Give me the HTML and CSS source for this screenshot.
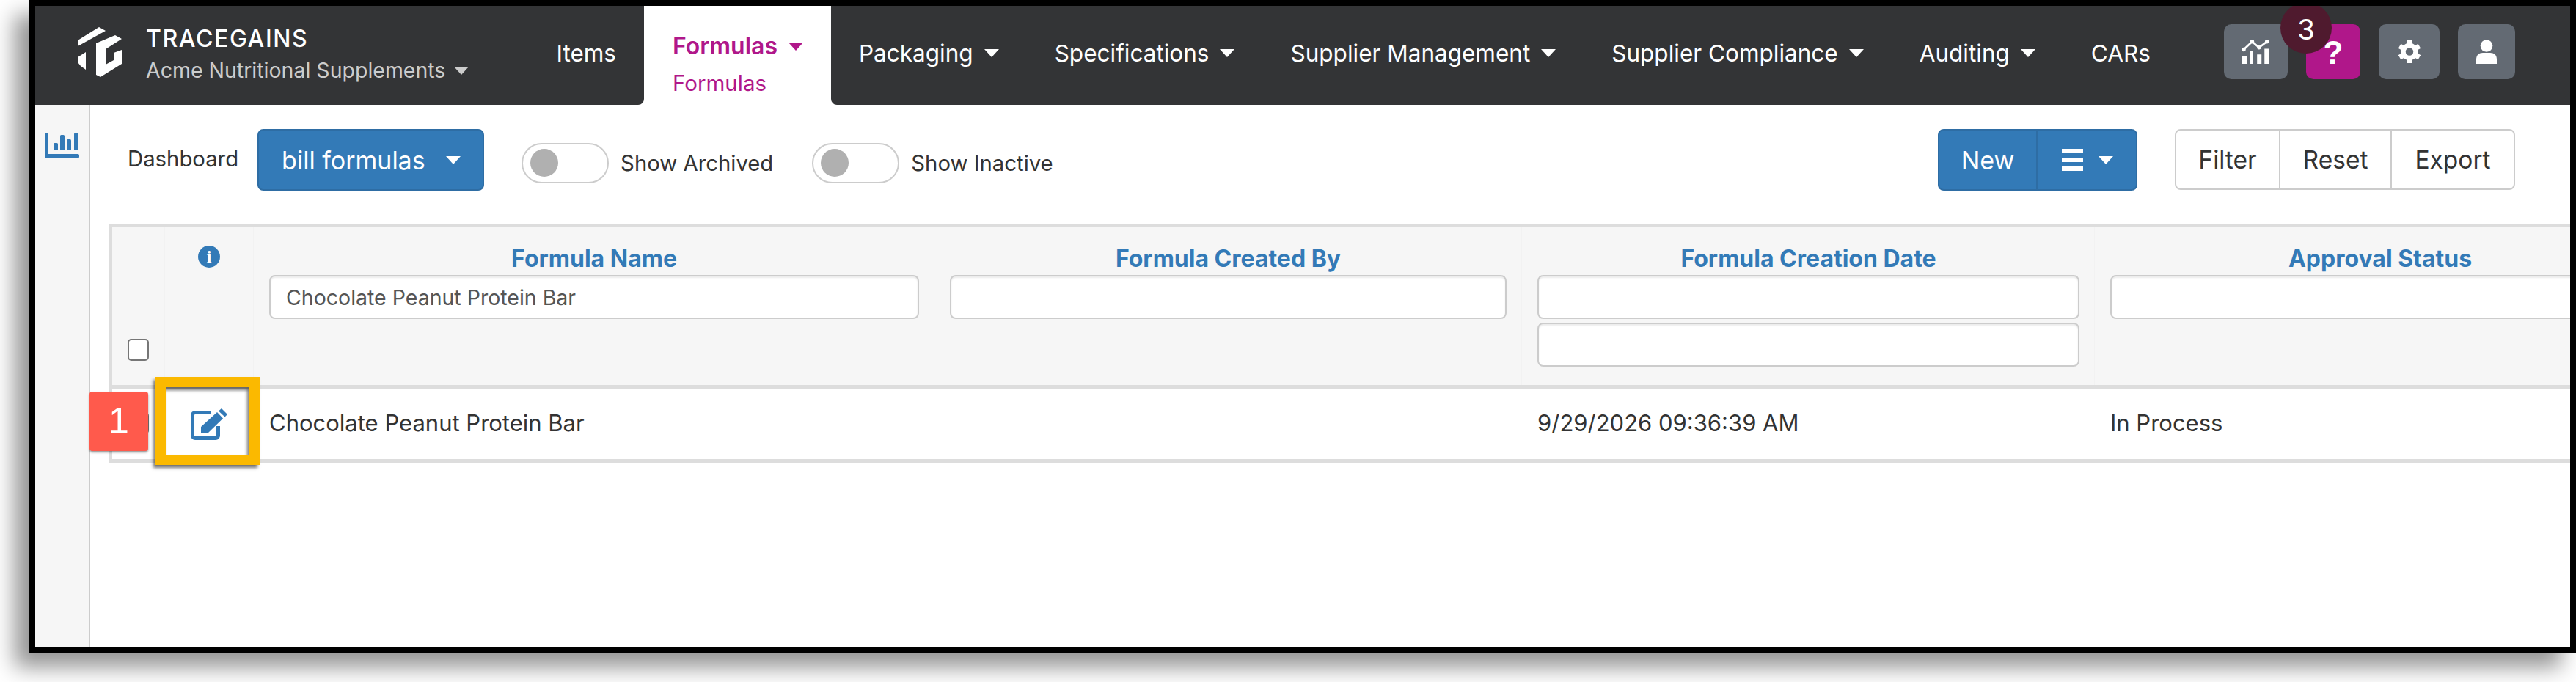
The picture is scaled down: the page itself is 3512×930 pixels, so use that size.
FILE: index.html
```html
<!DOCTYPE html>
<html lang="en">
<head>
<meta charset="utf-8">
<title>TraceGains Formulas</title>
<link rel="stylesheet" href="styles.css">
</head>
<body>
<div class="frame">
  <header class="nav">
    <div class="nav-left">
      <svg class="logo" viewBox="0 0 60 68"><path d="M0 18L29 0L38 5L0 26Z"/><path d="M0 41L11 34V58L4 53L0 48Z"/><path d="M25 22L51 11L60 16L38 30V51L49 45V35L60 31V50L31 68L25 65Z"/></svg>
      <div class="brand">
        <div class="brand-name">TRACEGAINS</div>
        <div class="brand-org">Acme Nutritional Supplements<i class="caret caret-muted"></i></div>
      </div>
      <a class="nav-item nav-item-push">Items</a>
    </div>
    <div class="nav-tab">
      <div class="tab-title">Formulas<i class="caret caret-brand"></i></div>
      <div class="tab-sub">Formulas</div>
    </div>
    <div class="nav-right">
      <a class="nav-item">Packaging<i class="caret"></i></a>
      <a class="nav-item">Specifications<i class="caret"></i></a>
      <a class="nav-item">Supplier Management<i class="caret"></i></a>
      <a class="nav-item">Supplier Compliance<i class="caret"></i></a>
      <a class="nav-item">Auditing<i class="caret"></i></a>
      <a class="nav-item">CARs</a>
      <div class="nav-icons">
        <span class="icon-btn icon-chart"><svg width="37" height="33" viewBox="0 0 110 98"><path fill="#fff" d="M0 68h18v30H0zM30 46h14v52H30zM60 60h18v38H60zM90 37h20v61H90z"/><path fill="none" stroke="#fff" stroke-width="8" d="M6 40L40 8L68 32L100 8"/><circle fill="#fff" cx="6" cy="40" r="8"/><circle fill="#fff" cx="40" cy="8" r="8"/><circle fill="#fff" cx="68" cy="32" r="8"/><circle fill="#fff" cx="100" cy="8" r="8"/></svg></span>
        <span class="icon-btn icon-help">?<b class="count">3</b></span>
        <span class="icon-btn icon-gear"><svg width="30" height="31" viewBox="0 0 30 31"><g fill="#fff"><rect x="11.500" y="0" width="7" height="6"/><rect x="11.500" y="0" width="7" height="6" transform="rotate(60 15 15.500)"/><rect x="11.500" y="0" width="7" height="6" transform="rotate(120 15 15.500)"/><rect x="11.500" y="0" width="7" height="6" transform="rotate(180 15 15.500)"/><rect x="11.500" y="0" width="7" height="6" transform="rotate(240 15 15.500)"/><rect x="11.500" y="0" width="7" height="6" transform="rotate(300 15 15.500)"/></g><circle cx="15" cy="15.500" r="8.500" fill="none" stroke="#fff" stroke-width="6.500"/></svg></span>
        <span class="icon-btn icon-user"><svg width="28" height="33" viewBox="0 0 28 33"><circle cx="14" cy="8.500" r="8.300" fill="#fff"/><path fill="#fff" d="M0 33V27C0 21 4 18 9 18H19C24 18 28 21 28 27V33Z"/></svg></span>
      </div>
    </div>
  </header>
  <div class="body">
    <aside class="sidebar">
      <svg width="47" height="35" viewBox="0 0 47 35"><path fill="#337ab7" d="M1 0h3a1 1 0 0 1 1 1v28h40a2 2 0 0 1 2 2v2a2 2 0 0 1-2 2H3a3 3 0 0 1-3-3V1a1 1 0 0 1 1-1Z"/><rect fill="#337ab7" x="12" y="14" width="6" height="10" rx="1.500"/><rect fill="#337ab7" x="21" y="3" width="6" height="21" rx="1.500"/><rect fill="#337ab7" x="30" y="9" width="6" height="15" rx="1.500"/><rect fill="#337ab7" x="40" y="0" width="6" height="24" rx="1.500"/></svg>
    </aside>
    <main class="content">
      <div class="toolbar">
        <span class="toolbar-label">Dashboard</span>
        <button class="btn btn-primary btn-dash">bill formulas<i class="caret"></i></button>
        <span class="toggle toggle-first"><i class="knob"></i></span>
        <span class="toggle-label">Show Archived</span>
        <span class="toggle toggle-second"><i class="knob"></i></span>
        <span class="toggle-label">Show Inactive</span>
        <div class="toolbar-right">
          <div class="btn-group btn-group-primary">
            <button class="btn btn-primary btn-new">New</button>
            <button class="btn btn-primary btn-menu"><span class="bars"><i></i><i></i><i></i></span><i class="caret"></i></button>
          </div>
          <div class="btn-group btn-group-plain">
            <button class="btn-plain btn-filter">Filter</button>
            <button class="btn-plain btn-reset">Reset</button>
            <button class="btn-plain btn-export">Export</button>
          </div>
        </div>
      </div>
      <div class="table">
        <div class="th th-check"><input class="check" type="checkbox"></div>
        <div class="th th-info"><span class="info">i</span></div>
        <div class="th"><div class="th-title">Formula Name</div><input class="filter" type="text" value="Chocolate Peanut Protein Bar"></div>
        <div class="th"><div class="th-title">Formula Created By</div><input class="filter" type="text"></div>
        <div class="th"><div class="th-title">Formula Creation Date</div><input class="filter" type="text"><input class="filter" type="text"></div>
        <div class="th"><div class="th-title">Approval Status</div><input class="filter" type="text"></div>
        <div class="td td-check"><input class="check" type="checkbox"></div>
        <div class="td td-edit"><svg width="51" height="46" viewBox="0 0 51 46"><path fill="none" stroke="#337ab7" stroke-width="5" d="M27 8.500H6a3.500 3.500 0 0 0-3.500 3.500v28a3.500 3.500 0 0 0 3.500 3.500h28a3.500 3.500 0 0 0 3.500-3.500V27"/><path fill="#337ab7" d="M14 37V28L36 8L44 16.500L23 37ZM38 6.500L42 3L50 11L46.500 14.500Z"/></svg></div>
        <div class="td">Chocolate Peanut Protein Bar</div>
        <div class="td"></div>
        <div class="td">9/29/2026 09:36:39 AM</div>
        <div class="td">In Process</div>
      </div>
    </main>
  </div>
  <div class="callout">1</div>
  <div class="highlight"></div>
</div>
</body>
</html>
```
FILE: styles.css
```css
* { box-sizing: border-box; }
html, body { margin: 0; height: 930px; background: #fff; overflow: hidden; }
body { font-family: Inter, "Liberation Sans", sans-serif; color: #333; }
.frame {
  position: relative;
  margin-left: 40px;
  width: 3472px;
  height: 890px;
  border: 8px solid #000;
  background: #fff;
  box-shadow: -20px 20px 28px rgba(0, 0, 0, .42);
}
.nav { display: flex; height: 135px; background: #fff; }
.nav-left, .nav-right { display: flex; background: #333436; color: #fff; }
.nav-left { width: 830px; border-bottom-right-radius: 8px; padding-left: 58px; }
.nav-right { flex: 1; border-bottom-left-radius: 8px; padding-right: 75px; }
.logo { width: 60px; height: 68px; margin-top: 29px; fill: #fff; flex: none; }
.brand { margin-left: 33px; padding-top: 30px; }
.brand-name { font-size: 32px; line-height: 30px; font-weight: 500; letter-spacing: 1.600px; white-space: nowrap; }
.brand-org { font-size: 28.500px; line-height: 30px; margin-top: 13px; color: #ccc; white-space: nowrap; display: flex; align-items: center; gap: 12px; }
.nav-item { display: flex; align-items: center; gap: 15px; height: 44px; margin-top: 42px; padding: 0 38px; font-size: 31.500px; white-space: nowrap; }
.nav-item-push { margin-left: auto; }
.caret { display: block; width: 0; height: 0; flex: none; border-style: solid; border-width: 11px 10px 0; border-color: currentColor transparent transparent; }
.caret-muted { color: #ccc; }
.nav-tab { width: 255px; padding: 35px 0 0 39px; color: #b0178a; }
.tab-title { display: flex; align-items: center; gap: 15px; font-size: 32px; line-height: 40px; font-weight: 600; }
.tab-sub { margin-top: 13px; font-size: 29.500px; line-height: 34px; }
.nav-icons { display: flex; gap: 25px; margin: 25px 0 0 auto; }
.icon-btn { position: relative; display: flex; align-items: center; justify-content: center; height: 75px; border-radius: 10px; background: #636a73; }
.icon-chart { width: 87px; }
.icon-help { width: 74px; background: #b0178a; color: #fff; font: 700 44px "Liberation Sans", sans-serif; padding-top: 2px; }
.icon-gear { width: 83px; }
.icon-user { width: 78px; }
.count {
  position: absolute;
  left: -35px;
  top: -30px;
  width: 70px;
  height: 70px;
  border-radius: 50%;
  background: #4f1a2e;
  color: #fff;
  font: 400 40px/70px "Liberation Sans", sans-serif;
  text-align: center;
  padding-top: 2px;
  clip-path: inset(5px 0 0 0);
}
.body { display: flex; height: 739px; }
.sidebar { width: 75px; flex: none; background: #f6f6f6; border-right: 2px solid #ccc; padding: 38px 0 0 13px; }
.content { flex: 1; min-width: 0; overflow: hidden; padding: 33px 0 0 25px; }
.toolbar { display: flex; align-items: center; height: 84px; margin-left: 26px; font-size: 29.300px; }
.toolbar-label { color: #333; padding-bottom: 3px; }
.btn { display: flex; align-items: center; border: 2px solid #2e6da4; font: inherit; }
.btn-primary { background: #337ab7; color: #fff; }
.btn-dash { height: 84px; width: 309px; margin-left: 26px; padding: 0 0 0 31px; gap: 28px; border-radius: 8px; font-size: 34px; }
.toggle { display: block; width: 119px; height: 55px; border: 2px solid #ccc; border-radius: 28px; padding: 6px 10px; margin-top: 8px; background: #fff; }
.toggle-first { margin-left: 51px; }
.toggle-second { margin-left: 53px; }
.knob { display: block; width: 38px; height: 38px; border-radius: 50%; background: #b0b0b0; }
.toggle-label { margin: 8px 0 0 16px; color: #333; }
.toolbar-right { display: flex; margin-left: auto; padding-right: 75px; gap: 51px; }
.btn-group { display: flex; height: 84px; }
.btn-new { width: 135px; height: 84px; justify-content: center; padding: 0; font-size: 34px; border-radius: 8px 0 0 8px; border-right-width: 1px; }
.btn-menu { width: 137px; height: 84px; padding: 0 0 0 33px; gap: 21px; border-radius: 0 8px 8px 0; border-left-width: 1px; }
.bars { display: flex; flex-direction: column; gap: 6px; width: 29px; }
.bars i { display: block; height: 6px; background: #fff; }
.btn-group-plain { border: 2px solid #ccc; border-radius: 8px; height: 83px; background: #fff; }
.btn-plain { border: 0; border-right: 2px solid #ccc; background: none; font: inherit; font-size: 33.500px; color: #333; padding: 0; }
.btn-filter { width: 142px; }
.btn-reset { width: 152px; }
.btn-export { width: 166px; border-right: 0; }
.table {
  display: grid;
  grid-template-columns: 72px 121px 928px 801px 781px 778px;
  grid-template-rows: 215px 96px;
  width: 3491px;
  margin-top: 45px;
  border: 5px solid #ddd;
  border-right: 0;
  background: #ddd;
  row-gap: 5px;
}
.th { display: flex; flex-direction: column; gap: 5px; padding: 26px 20px 0 21px; background: #f6f6f6; border-right: 1px solid #f2f2f2; }
.th-title { height: 34px; color: #337ab7; font-weight: 700; font-size: 32px; line-height: 34px; text-align: center; white-space: nowrap; }
.filter { width: 100%; height: 60px; flex: none; padding: 0 21px; border: 2px solid #ccc; border-radius: 8px; box-shadow: inset 0 2px 2px rgba(0, 0, 0, .08); background: #fff; color: #555; font: 28.500px Inter, "Liberation Sans", sans-serif; }
.th-check { padding: 152px 0 0 21px; }
.th-info { align-items: center; padding: 25px 0 0; }
.check { appearance: none; width: 29px; height: 30px; margin: 0; border: 2px solid #767676; border-radius: 5px; background: #fff; }
.info { display: block; width: 30px; height: 30px; border-radius: 50%; background: #337ab7; color: #fff; font: 700 24px/30px "Liberation Serif", serif; text-align: center; }
.td { display: flex; align-items: center; padding: 0 0 3px 21px; background: #fff; font-size: 31px; color: #333; white-space: nowrap; }
.td-edit { padding-left: 35px; }
.callout {
  position: absolute;
  left: 74px;
  top: 526px;
  width: 80px;
  height: 81px;
  border-radius: 4px;
  background: #ff5a4c;
  box-shadow: 0 2px 3px rgba(0, 0, 0, .4);
  color: #fff;
  font: 400 50px/81px "Liberation Sans", sans-serif;
  text-align: center;
}
.highlight {
  position: absolute;
  left: 164px;
  top: 506px;
  width: 142px;
  height: 120px;
  border: 14px solid #fbb900;
  box-shadow: -3px 4px 4px rgba(0, 0, 0, .55), inset -3px 4px 4px rgba(0, 0, 0, .55);
}
```
